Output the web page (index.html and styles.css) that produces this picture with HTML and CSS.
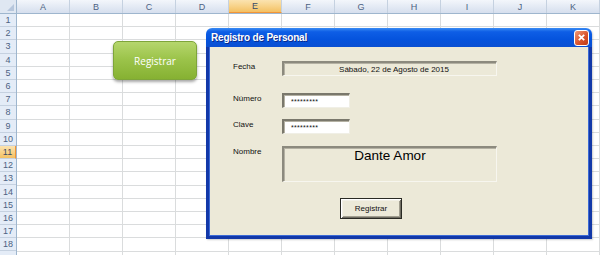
FILE: index.html
```html
<!DOCTYPE html>
<html>
<head>
  <title>Registro de Personal</title>
  <link rel="stylesheet" href="styles.css">
</head>
<body>
  <div class="sheet">
    <div class="corner"><span class="corner-mark"></span></div>
    <div class="col-heads">
      <div class="col-head">A</div>
      <div class="col-head">B</div>
      <div class="col-head">C</div>
      <div class="col-head">D</div>
      <div class="col-head active">E</div>
      <div class="col-head">F</div>
      <div class="col-head">G</div>
      <div class="col-head">H</div>
      <div class="col-head">I</div>
      <div class="col-head">J</div>
      <div class="col-head">K</div>
    </div>
    <div class="row-heads">
      <div class="row-head">1</div>
      <div class="row-head">2</div>
      <div class="row-head">3</div>
      <div class="row-head">4</div>
      <div class="row-head">5</div>
      <div class="row-head">6</div>
      <div class="row-head">7</div>
      <div class="row-head">8</div>
      <div class="row-head">9</div>
      <div class="row-head">10</div>
      <div class="row-head active">11</div>
      <div class="row-head">12</div>
      <div class="row-head">13</div>
      <div class="row-head">14</div>
      <div class="row-head">15</div>
      <div class="row-head">16</div>
      <div class="row-head">17</div>
      <div class="row-head">18</div>
      <div class="row-head"></div>
    </div>
    <div class="cells"></div>
  </div>

  <!-- shape button placed on the worksheet -->
  <button class="shape-btn">Registrar</button>

  <!-- userform window -->
  <div class="dialog">
    <div class="titlebar">
      <span class="title">Registro de Personal</span>
      <span class="close">
        <svg viewBox="0 0 10 10" class="close-x">
          <path d="M2,2 L8,8 M8,2 L2,8"/>
        </svg>
      </span>
    </div>
    <div class="dialog-body">
      <div class="field">
        <span class="field-label">Fecha</span>
        <div class="box box-date">Sábado, 22 de Agosto de 2015</div>
      </div>
      <div class="field field-num">
        <span class="field-label">Número</span>
        <div class="box box-input">*********</div>
      </div>
      <div class="field field-key">
        <span class="field-label">Clave</span>
        <div class="box box-input">*********</div>
      </div>
      <div class="field field-name">
        <span class="field-label">Nombre</span>
        <div class="box box-name">Dante Amor</div>
      </div>
      <div class="actions">
        <button class="form-btn"><span>Registrar</span></button>
      </div>
    </div>
  </div>
</body>
</html>
```

FILE: styles.css
```css
:root {
  --grid-line: #dadcdd;
  --head-bg: linear-gradient(to bottom, #f3f6fb 0%, #e1e8f3 60%, #d6dfee 100%);
  --head-line: #9eb6ce;
  --head-text: #4c6283;
  --active-bg: linear-gradient(to bottom, #fbe3b0 0%, #f8d38a 50%, #f3c063 100%);
  --face: #ece9d8;
  --xp-blue: #1238a8;
}

body {
  margin: 0;
  width: 600px;
  height: 255px;
  overflow: hidden;
  position: relative;
  background: #fff;
  font-family: "Liberation Sans", Arial, sans-serif;
}

/* worksheet */
.sheet {
  display: grid;
  grid-template-columns: 17px 583px;
  grid-template-rows: 14px 241px;
}

.corner {
  background: #dfe7f2;
  border-right: 1px solid var(--head-line);
  border-bottom: 1px solid var(--head-line);
  box-sizing: border-box;
  position: relative;
}

.corner-mark {
  position: absolute;
  right: 2px;
  bottom: 2px;
  width: 0;
  height: 0;
  border-left: 7px solid transparent;
  border-bottom: 7px solid #b6c6dc;
}

.col-heads {
  display: grid;
  grid-template-columns: repeat(11, 53px);
  background: var(--head-bg);
  border-bottom: 1px solid var(--head-line);
  box-sizing: border-box;
}

.col-head {
  display: flex;
  align-items: center;
  justify-content: center;
  font-size: 9px;
  color: var(--head-text);
  border-right: 1px solid #c5d1e0;
}

.col-head.active {
  background: var(--active-bg);
  border-bottom: 1px solid #f29536;
  color: #3c4c66;
}

.row-heads {
  display: flex;
  flex-direction: column;
  background: var(--head-bg);
  border-right: 1px solid var(--head-line);
  box-sizing: border-box;
}

.row-head {
  flex: 0 0 13.2px;
  box-sizing: border-box;
  display: flex;
  align-items: center;
  justify-content: center;
  font-size: 9px;
  color: var(--head-text);
  background: #e4ecf7;
  border-bottom: 1px solid #c5d1e0;
}

.row-head.active {
  background: var(--active-bg);
  border-right: 1px solid #f29536;
  color: #3c4c66;
}

.cells {
  background-image:
    repeating-linear-gradient(to right, transparent 0 52px, var(--grid-line) 52px 53px),
    repeating-linear-gradient(to bottom, transparent 0 12.2px, var(--grid-line) 12.2px 13.2px);
}

/* green shape */
.shape-btn {
  position: absolute;
  left: 113px;
  top: 41px;
  width: 84px;
  height: 39px;
  border: 1px solid #7ea53a;
  border-radius: 5px;
  background: linear-gradient(to bottom, #b5d66d 0%, #9cc44b 45%, #86b132 100%);
  box-shadow: 0 2px 3px rgba(0, 0, 0, 0.35);
  color: #fff;
  font-family: "Open Sans", sans-serif;
  font-size: 10px;
  padding: 0;
}

/* dialog window */
.dialog {
  position: absolute;
  left: 206px;
  top: 28px;
  width: 386px;
  height: 211px;
  display: flex;
  flex-direction: column;
  border-radius: 6px 6px 0 0;
  box-shadow: 1px 1px 2px rgba(0, 0, 0, 0.2);
}

.titlebar {
  height: 19px;
  flex: none;
  display: flex;
  align-items: center;
  justify-content: space-between;
  padding: 0 3px 0 5px;
  border-radius: 6px 6px 0 0;
  background: linear-gradient(to bottom, #3a8cf4 0%, #0e5ee6 20%, #0553dd 60%, #0a4fd2 100%);
}

.title {
  color: #fff;
  font-size: 10px;
  font-weight: bold;
  letter-spacing: -0.2px;
  text-shadow: 1px 1px 0 #0a2a8a;
}

.close {
  width: 13px;
  height: 14px;
  border: 1px solid #fff;
  border-radius: 3px;
  background: linear-gradient(135deg, #ef9a78 0%, #d9552e 55%, #bf3a16 100%);
  display: flex;
  align-items: center;
  justify-content: center;
}

.close-x {
  width: 9px;
  height: 9px;
  stroke: #fff;
  stroke-width: 2;
  fill: none;
}

.dialog-body {
  flex: 1;
  background: var(--face);
  border: 3px solid var(--xp-blue);
  border-top: none;
  padding: 14px 0 0 24px;
  box-shadow: inset 1px 0 0 #3b6ad6, inset -1px -1px 0 #3b6ad6;
  font-size: 8px;
  color: #111;
}

.field {
  display: flex;
  align-items: flex-start;
}

.field-num {
  margin-top: 17px;
}

.field-key {
  margin-top: 11px;
}

.field-name {
  margin-top: 12px;
}

.field-label {
  width: 49px;
  flex: none;
  line-height: 11px;
}

.box {
  box-sizing: border-box;
  border: 1px solid #fff;
  box-shadow: inset 1px 1px 0 #b4b1a3;
}

.box-date {
  width: 215px;
  height: 15px;
  line-height: 13px;
  text-align: center;
  padding-left: 8px;
  border-color: #8c8a7e #f7f6ef #f7f6ef #8c8a7e;
  border-width: 2px 1px 1px 2px;
}

.box-input {
  width: 68px;
  height: 15px;
  line-height: 13px;
  padding-left: 7px;
  background: #fff;
  border-color: #7a786c #f0efe6 #f0efe6 #7a786c;
  border-width: 2px 1px 1px 2px;
  font-size: 7px;
  letter-spacing: 0.3px;
}

.box-name {
  width: 215px;
  height: 36px;
  text-align: center;
  font-size: 13.5px;
  line-height: 16px;
  border-color: #8c8a7e #f7f6ef #f7f6ef #8c8a7e;
  border-width: 2px 1px 1px 2px;
  color: #000;
}

.actions {
  margin-top: 16px;
  padding-left: 107px;
}

.form-btn {
  width: 62px;
  height: 21px;
  padding: 0;
  background: var(--face);
  border: 1px solid #2a2a24;
  box-shadow: inset 1px 1px 0 #fff, inset -1px -1px 0 #6f6d62, inset 2px 2px 0 #f2f0e6, inset -2px -2px 0 #a19e90;
  font-family: "Liberation Sans", Arial, sans-serif;
  font-size: 8px;
  color: #111;
}
```
